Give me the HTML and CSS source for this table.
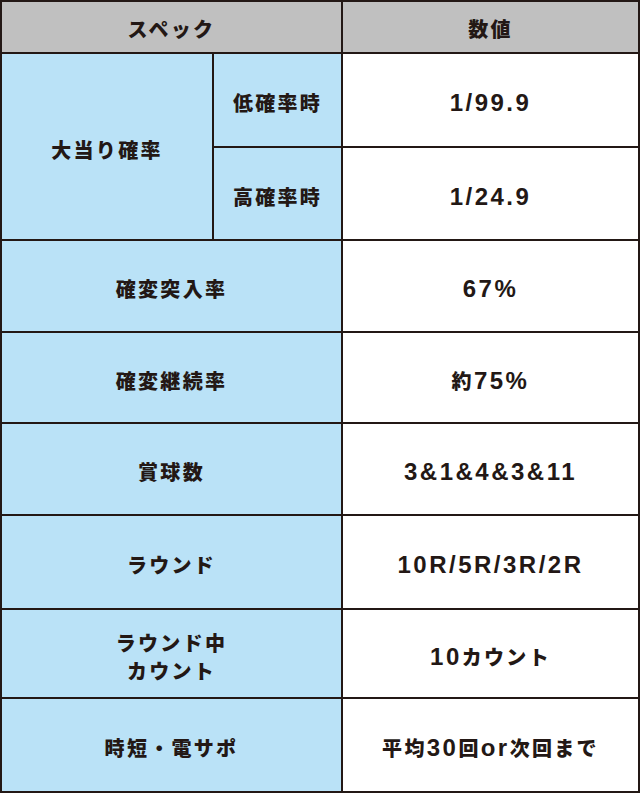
FILE: index.html
```html
<!DOCTYPE html>
<html lang="ja">
<head>
<meta charset="utf-8">
<title>スペック</title>
<link rel="stylesheet" href="styles.css">
</head>
<body>
<div class="spec">
  <div class="cell head span2">スペック</div>
  <div class="cell head">数値</div>

  <div class="cell label rows2">大当り確率</div>
  <div class="cell label">低確率時</div>
  <div class="cell value"><span class="num">1/99.9</span></div>
  <div class="cell label">高確率時</div>
  <div class="cell value"><span class="num">1/24.9</span></div>

  <div class="cell label span2">確変突入率</div>
  <div class="cell value"><span class="num">67%</span></div>

  <div class="cell label span2">確変継続率</div>
  <div class="cell value">約<span class="num">75%</span></div>

  <div class="cell label span2">賞球数</div>
  <div class="cell value"><span class="num">3&amp;1&amp;4&amp;3&amp;11</span></div>

  <div class="cell label span2">ラウンド</div>
  <div class="cell value"><span class="num">10R/5R/3R/2R</span></div>

  <div class="cell label span2">ラウンド中<br>カウント</div>
  <div class="cell value"><span class="num">10</span>カウント</div>

  <div class="cell label span2">時短・電サポ</div>
  <div class="cell value">平均<span class="num">30</span>回<span class="num">or</span>次回まで</div>
</div>
</body>
</html>
```
FILE: styles.css
```css
html, body {
  margin: 0;
  padding: 0;
  background: #ffffff;
}
.spec {
  display: grid;
  width: 640px;
  box-sizing: border-box;
  grid-template-columns: 210px 127px 295px;
  grid-template-rows: 50px 92px 91px 90px 89px 90px 92px 87px 92px;
  gap: 2px;
  padding: 2px;
  background: #231815;
  font-family: "Noto Sans CJK JP", sans-serif;
  font-weight: 900;
  font-size: 20px;
  letter-spacing: 2.3px;
  color: #231815;
}
.cell {
  display: flex;
  align-items: center;
  justify-content: center;
  text-align: center;
  padding-top: 6px;
  box-sizing: border-box;
  line-height: 28px;
}
.head {
  background: #c0c0c0;
  padding-top: 4px;
}
.label {
  background: #bae2f7;
}
.value {
  background: #ffffff;
}
.span2 {
  grid-column: span 2;
}
.rows2 {
  grid-row: span 2;
}
.num {
  font-family: "Liberation Sans", Arial, sans-serif;
  font-weight: 700;
  font-size: 24px;
  letter-spacing: 2.5px;
}
```
